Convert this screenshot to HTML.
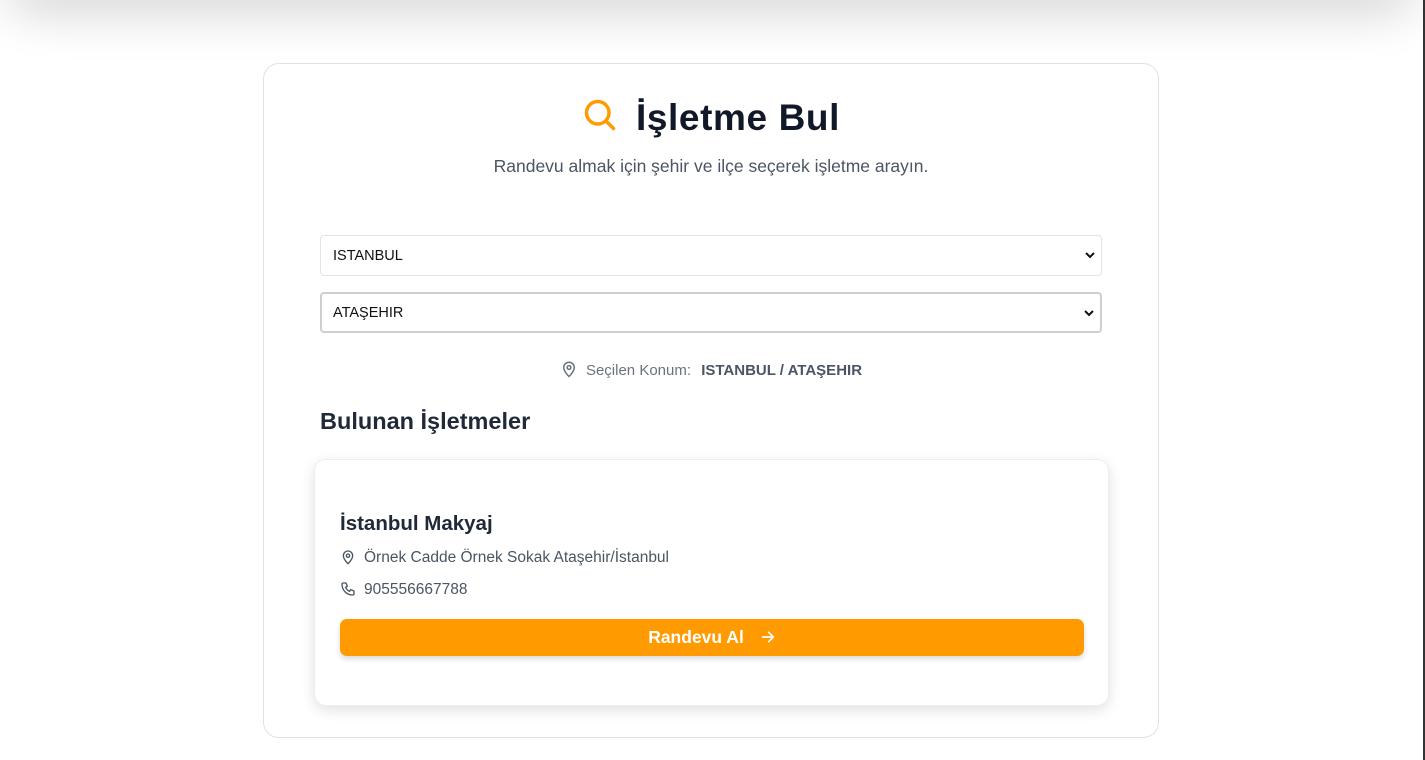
<!DOCTYPE html>
<html><head><meta charset="utf-8"><style>
*{box-sizing:border-box;margin:0;padding:0}
html,body{width:1425px;height:760px;overflow:hidden;background:#fff;font-family:"Liberation Sans","DejaVu Sans",sans-serif}
.top{position:absolute;left:0;top:-40px;width:1423px;height:40px;box-shadow:0 10px 50px rgba(0,0,0,.2);border-radius:0 0 60px 60px}
.edge{position:absolute;right:0;top:0;width:2px;height:760px;background:#333}
.card{position:absolute;left:263px;top:63px;width:896px;height:675px;border:1px solid #e2e2e2;border-radius:16px;background:#fff}
h1{position:absolute;left:0;right:0;top:33px;text-align:center;font-size:37px;font-weight:bold;color:#111827;letter-spacing:.6px}
h1 svg{vertical-align:-3px;margin-right:18px}
.sub{position:absolute;left:0;right:0;top:92px;text-align:center;font-size:17.5px;color:#4b5563}
.sel{position:absolute;left:56px;width:782px;height:41px;border:1px solid #e3e3e3;border-radius:4px;font-size:14.5px;color:#111;padding:12px 12px;background:#fff}
.sel.b{border:2px solid #cfcfcf;padding:11px 11px}
.sel svg{position:absolute;right:6px;top:15px}
.loc{position:absolute;left:0;right:0;top:296px;text-align:center;font-size:15px;color:#6b7280}
.loc svg{vertical-align:-3px;margin-right:8px}
.loc b{color:#4b5563;margin-left:6px}
h2{position:absolute;left:56px;top:344px;font-size:23.5px;color:#1f2937;font-weight:bold}
.res{position:absolute;left:50px;top:395px;width:795px;height:247px;border:1px solid #eee;border-radius:12px;box-shadow:0 4px 14px rgba(0,0,0,.12);background:#fff}
.res h3{position:absolute;left:25px;top:52px;font-size:20.5px;color:#1f2937}
.ln{position:absolute;left:25px;font-size:15.5px;color:#4b5563}
.ln svg{vertical-align:-3px;margin-right:8px}
.btn{position:absolute;left:25px;top:159px;width:744px;height:37px;background:#ff9a00;border-radius:7px;box-shadow:0 3px 6px rgba(0,0,0,.15);color:#fff;font-weight:bold;font-size:17.5px;text-align:center;line-height:37px}
.btn svg{vertical-align:-2px;margin-left:16px}
</style></head><body>
<div class="top"></div>
<div class="card">
<h1><svg width="36" height="36" viewBox="0 0 24 24" fill="none" stroke="#ff9a00" stroke-width="2.3" stroke-linecap="round"><circle cx="10.5" cy="10.5" r="7.5"/><path d="M16 16l5 5"/></svg>İşletme Bul</h1>
<div class="sub">Randevu almak için şehir ve ilçe seçerek işletme arayın.</div>
<div class="sel" style="top:171px">ISTANBUL<svg width="10" height="8" viewBox="0 0 10 8"><path d="M1 2l4 4 4-4" stroke="#111" stroke-width="2" fill="none"/></svg></div>
<div class="sel b" style="top:228px">ATAŞEHIR<svg width="10" height="8" viewBox="0 0 10 8"><path d="M1 2l4 4 4-4" stroke="#111" stroke-width="2" fill="none"/></svg></div>
<div class="loc"><svg width="18" height="18" viewBox="0 0 24 24" fill="none" stroke="#6b7280" stroke-width="2"><path d="M12 22s7-6.5 7-12a7 7 0 0 0-14 0c0 5.5 7 12 7 12z"/><circle cx="12" cy="10" r="2.5"/></svg>Seçilen Konum: <b>ISTANBUL / ATAŞEHIR</b></div>
<h2>Bulunan İşletmeler</h2>
<div class="res">
<h3>İstanbul Makyaj</h3>
<div class="ln" style="top:89px"><svg width="16" height="16" viewBox="0 0 24 24" fill="none" stroke="#4b5563" stroke-width="2"><path d="M12 22s7-6.5 7-12a7 7 0 0 0-14 0c0 5.5 7 12 7 12z"/><circle cx="12" cy="10" r="2.5"/></svg>Örnek Cadde Örnek Sokak Ataşehir/İstanbul</div>
<div class="ln" style="top:121px"><svg width="16" height="16" viewBox="0 0 24 24" fill="none" stroke="#4b5563" stroke-width="2" stroke-linejoin="round"><path d="M5 3h4l2 5-2.5 1.5a11 11 0 0 0 6 6L16 13l5 2v4a2 2 0 0 1-2 2A16 16 0 0 1 3 5a2 2 0 0 1 2-2z"/></svg>905556667788</div>
<div class="btn">Randevu Al<svg width="16" height="16" viewBox="0 0 24 24" fill="none" stroke="#fff" stroke-width="2.5" stroke-linecap="round"><path d="M4 12h16M13 5l7 7-7 7"/></svg></div>
</div>
</div>
<div class="edge"></div>
</body></html>
